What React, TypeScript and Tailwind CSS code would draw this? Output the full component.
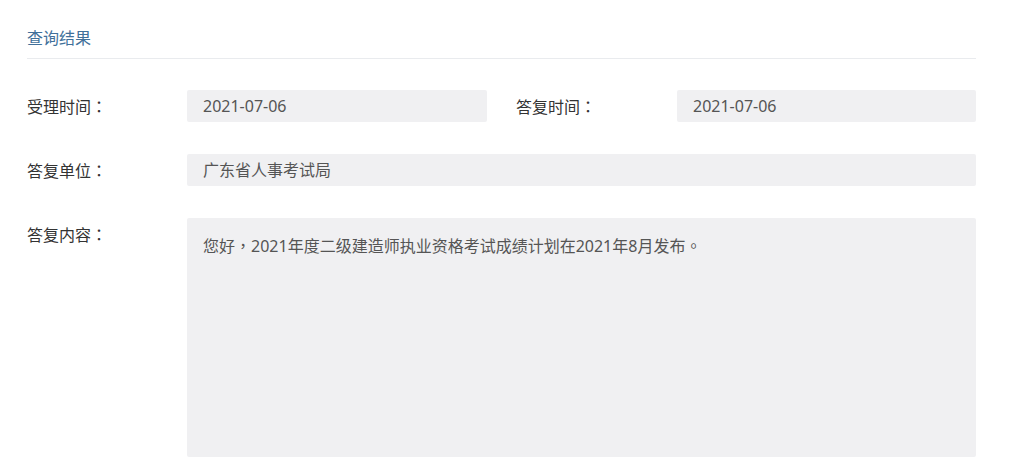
import React from "react";

const font = { fontFamily: '"Noto Sans", "Noto Sans CJK SC", sans-serif' };

// centered full-width punctuation, as in the reference
function P({ children }: { children: React.ReactNode }) {
  return <span className="font-['Noto_Sans_CJK_TC',sans-serif]">{children}</span>;
}

function Field({ children, className = "" }: { children: React.ReactNode; className?: string }) {
  return (
    <div className={`bg-[#f0f0f2] rounded-[2px] px-4 text-[#555] text-[16px] ${className}`}>{children}</div>
  );
}

export default function App() {
  return (
    <div className="min-h-screen bg-white" style={font}>
      <div className="ml-[27px] w-[949px] pt-[26px]">
        {/* header */}
        <div className="pb-[8px] border-b border-[#e9ebee]">
          <h2 className="text-[16px] leading-6 text-[#41709a]">查询结果</h2>
        </div>

        <div className="mt-[31px] flex flex-col gap-8">
          <div className="flex items-center h-8">
            <div className="w-[160px] shrink-0 text-[16px] text-[#333]">受理时间<P>：</P></div>
            <Field className="w-[300px] shrink-0 h-8 leading-8">2021-07-06</Field>
            <div className="w-[190px] shrink-0 pl-[29px] text-[16px] text-[#333]">答复时间<P>：</P></div>
            <Field className="flex-1 h-8 leading-8">2021-07-06</Field>
          </div>

          <div className="flex items-center h-8">
            <div className="w-[160px] shrink-0 text-[16px] text-[#333]">答复单位<P>：</P></div>
            <Field className="flex-1 h-8 leading-8">广东省人事考试局</Field>
          </div>

          <div className="flex items-start">
            <div className="w-[160px] shrink-0 leading-8 text-[16px] text-[#333]">答复内容<P>：</P></div>
            <Field className="flex-1 h-[239px] pt-[15px] leading-6">
              您好<P>，</P>2021年度二级建造师执业资格考试成绩计划在2021年8月发布<P>。</P>
            </Field>
          </div>
        </div>
      </div>
    </div>
  );
}
